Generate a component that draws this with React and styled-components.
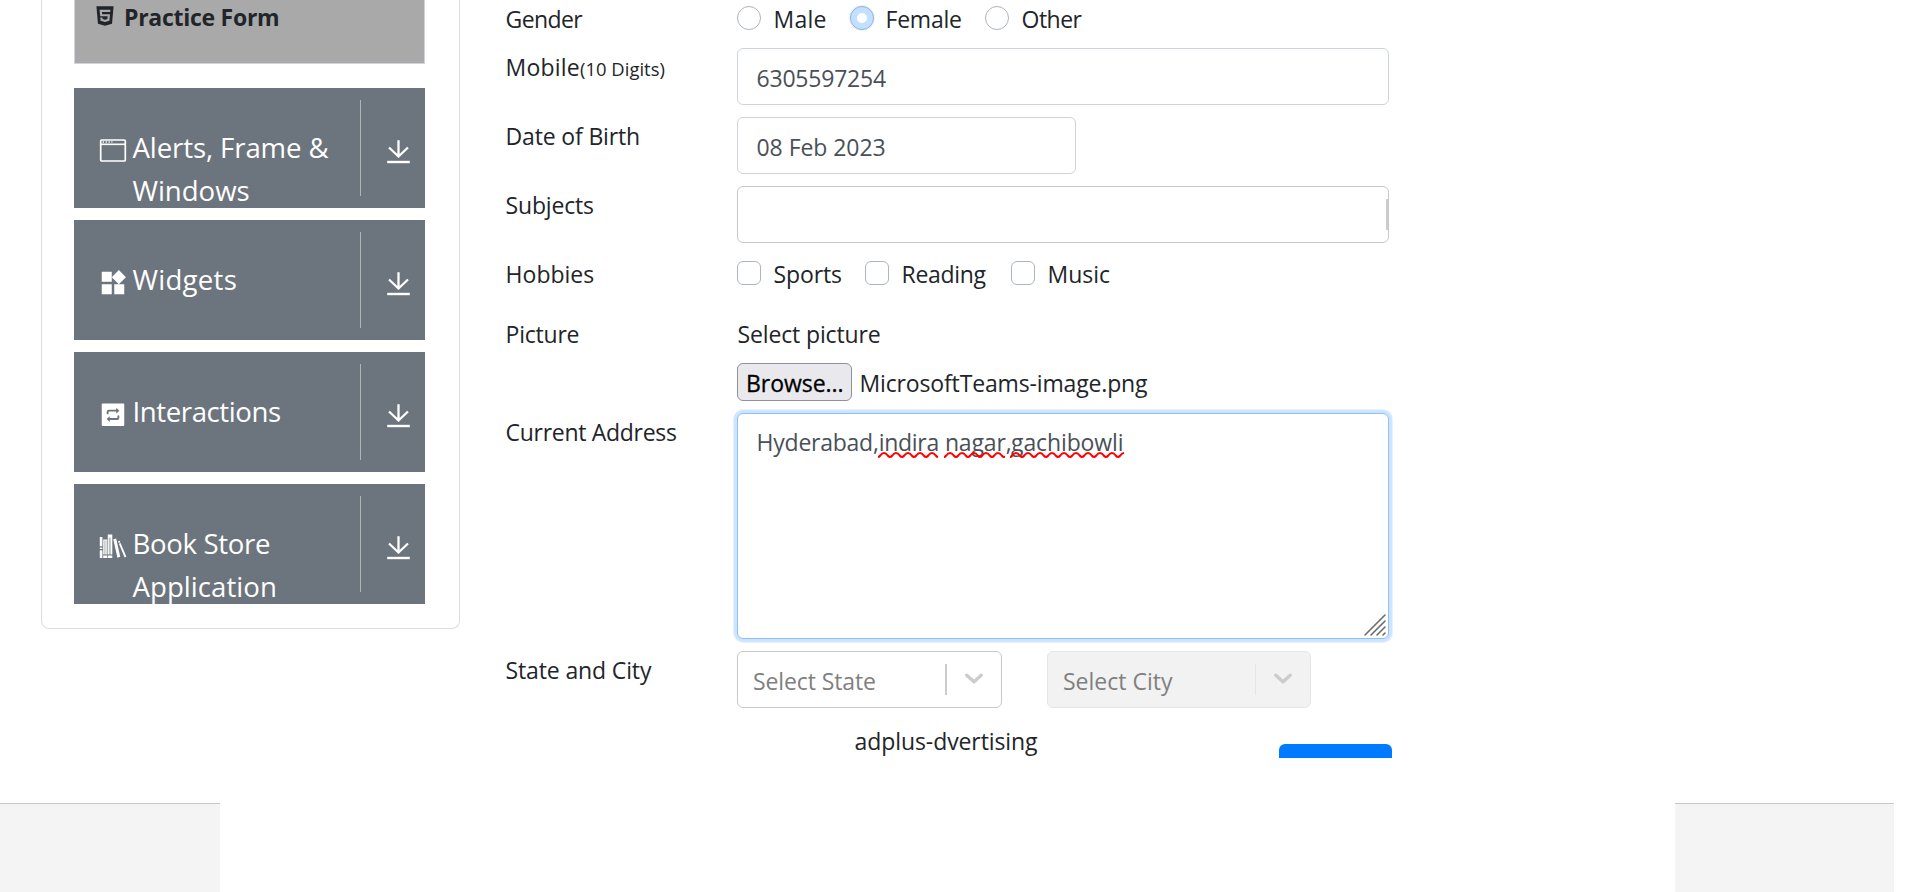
import React from "react";
import styled, { createGlobalStyle, css } from "styled-components";
import { AiFillHtml5 } from "react-icons/ai";
import { MdWidgets } from "react-icons/md";

const GlobalStyle = createGlobalStyle`
  *, *::before, *::after { box-sizing: border-box; }
  body {
    margin: 0;
    background: #fff;
    color: #212529;
    font-family: "Open Sans", "Noto Sans", sans-serif;
    font-size: 23px;
    line-height: 36px;
    overflow: hidden;
  }
`;

const Page = styled.div`
  display: flex;
  flex-direction: column;
  width: 1920px;
  height: 892px;
  overflow: hidden;
`;

const Main = styled.main`
  display: flex;
  align-items: flex-start;
  height: 758px;
  overflow: hidden;
`;

const Text = styled.span`
  white-space: pre;
  letter-spacing: ${(p) => p.$track ?? -0.15}px;
`;

/* ---------- sidebar ---------- */

const Sidebar = styled.aside`
  width: 419px;
  height: 629px;
  margin-left: 41px;
  padding: 0 34px 24px 32px;
  border: 1px solid #dcdddf;
  border-top: 0;
  border-radius: 0 0 8px 8px;
`;

const ActiveItem = styled.div`
  display: flex;
  height: 64px;
  margin-bottom: 24px;
  padding: 4px 0 0 18px;
  background: #a9a9a9;
  border: 1px solid #d0d4da;
  border-top: 0;
  font-weight: 700;
  line-height: 28px;
  svg { flex: none; margin-right: 7px; }
`;

const ActiveLabel = styled(Text)`
  margin-top: -1px;
`;

const Group = styled.section`
  display: flex;
  height: 120px;
  margin-bottom: 12px;
  background: #6c747d;
  color: #fff;
  overflow: hidden;
`;

const GroupHead = styled.div`
  display: flex;
  flex: 1;
  padding: 38px 0 0 23.5px;
`;

const GroupIcon = styled.span`
  flex: none;
  width: 35px;
  height: 30px;
  margin-top: 10px;
  svg { display: block; }
`;

const GroupTitle = styled.div`
  display: flex;
  flex-direction: column;
  font-size: 27.6px;
  line-height: 43.2px;
`;

const GroupToggle = styled.div`
  width: 65px;
  height: 96px;
  margin-top: 12px;
  padding: 38px 0 0 24px;
  border-left: 1px solid #b3b3b3;
  svg { display: block; }
`;

/* ---------- form ---------- */

const Form = styled.form`
  width: 888px;
  margin-left: 44px;
`;

const Row = styled.div`
  display: grid;
  grid-template-columns: 233px 1fr;
  align-items: start;
  height: ${(p) => p.$h}px;
`;

const Label = styled.label`
  padding: 1px 0 0 1.6px;
`;

const Small = styled(Text)`
  font-size: 18.4px;
`;

const field = css`
  border: 1px solid #ced4da;
  border-radius: 6px;
  background: #fff;
`;

const Input = styled.div`
  ${field}
  display: flex;
  width: ${(p) => p.$w}px;
  height: 57px;
  padding: 11px 0 0 18.5px;
  color: #495057;
`;

const Subjects = styled.div`
  ${field}
  display: flex;
  align-items: center;
  justify-content: flex-end;
  width: 652px;
  height: 57px;
  border-color: #c8c8c8;
`;

const Separator = styled.span`
  flex: none;
  width: ${(p) => p.$w ?? 2}px;
  height: 31px;
  margin-top: -1px;
  background: ${(p) => (p.$faint ? "#e6e6e6" : "#ccc")};
`;

const Options = styled.div`
  display: flex;
  padding-top: ${(p) => p.$top}px;
`;

const Option = styled.label`
  display: flex;
  width: ${(p) => p.$w}px;
`;

const Mark = styled.span`
  flex: none;
  display: grid;
  place-items: center;
  width: 24px;
  height: 24px;
  margin-right: 12.5px;
  border: 1px solid #adb5bd;
  border-radius: ${(p) => (p.$round ? "50%" : "6px")};
  ${(p) =>
    p.$on &&
    css`
      margin-right: 11.5px;
      background: #c4e0ff;
      border-color: #8fb4dc;
      box-shadow: 0 0 0 1px #e8f2fd;
      &::after {
        content: "";
        width: 10px;
        height: 10px;
        border-radius: 50%;
        background: #fff;
      }
    `}
`;

const OptionText = styled(Text)`
  margin-top: ${(p) => p.$drop}px;
`;

const Picture = styled.div`
  display: flex;
  flex-direction: column;
  padding-top: 1px;
`;

const PictureTitle = styled(Text)`
  padding-left: 0.6px;
`;

const FilePicker = styled.div`
  display: flex;
  height: 38px;
  margin-top: 11px;
  line-height: 40px;
`;

const Browse = styled.button`
  width: 115px;
  height: 38px;
  margin: 0 7.5px 0 0;
  padding: 0 0 0 8px;
  border: 1px solid #8f8f9d;
  border-radius: 6px;
  background: #e9e9ed;
  color: #000;
  font: inherit;
  line-height: 39px;
  text-align: left;
  -webkit-text-stroke: 0.3px #000;
`;

const TextArea = styled.div`
  ${field}
  position: relative;
  display: flex;
  width: 652px;
  height: 226px;
  padding: 10px 0 0 18.6px;
  border-color: #8cc0f8;
  box-shadow: 0 0 0 3px #cfe5ff, 0 0 0 4px #e6f2ff;
  color: #495057;
`;

const Misspelt = styled(Text)`
  position: relative;
  svg {
    position: absolute;
    left: -1px;
    top: 28px;
  }
`;

const Grip = styled.svg`
  position: absolute;
  right: 1px;
  bottom: 1px;
`;

const Selects = styled.div`
  display: flex;
  gap: 45px;
`;

const Select = styled.div`
  ${field}
  display: flex;
  align-items: center;
  width: ${(p) => p.$w}px;
  height: 57px;
  border-color: ${(p) => (p.$off ? "#e6e6e6" : "#c8c8c8")};
  background: ${(p) => (p.$off ? "#f2f2f2" : "#fff")};
  color: #808080;
  padding-left: 15px;
  svg { flex: none; margin: -1px 17px 0 17px; }
`;

const SelectText = styled(Text)`
  flex: 1;
  margin-top: 3px;
`;

const Actions = styled.div`
  display: flex;
  align-items: flex-start;
  justify-content: space-between;
  padding: 15px 0 0 350.6px;
`;

const Submit = styled.button`
  width: 113px;
  height: 57px;
  margin: 21px 0 0;
  border: 0;
  border-radius: 6px;
  background: #007bff;
`;

/* ---------- footer ---------- */

const Footer = styled.footer`
  display: flex;
  justify-content: space-between;
  width: 1894px;
  height: 89px;
  margin-top: 45px;
`;

const FooterPanel = styled.div`
  width: ${(p) => p.$w}px;
  background: #f4f4f4;
  border-top: 1px solid #c8c8c8;
`;

/* ---------- drawings ---------- */

const WindowIcon = () => (
  <svg width="30" height="30" viewBox="0 0 30 30" fill="none" stroke="#fff">
    <rect x="2.7" y="4" width="24.6" height="21" rx="1" strokeWidth="1.7" />
    <path d="M2.7 8.3h24.6" strokeWidth="1.6" />
    <path d="M4.7 6.1h1.3M7.6 6.1h1.3M10.5 6.1h1.3M13.4 6.1h1" strokeWidth="1.5" />
  </svg>
);

const SwapIcon = () => (
  <svg width="30" height="30" viewBox="0 0 24 24">
    <rect x="3" y="2.8" width="18" height="18" rx="0.8" fill="#fff" />
    <g fill="none" stroke="#6c747d" strokeWidth="1.5" strokeLinecap="round" strokeLinejoin="round">
      <path d="M7.7 10.7V9.5q0-1 1-1h6.4M16.3 13v1.2q0 1-1 1H8.9" />
    </g>
    <path d="M14.6 6.2v4.6l2.5-2.3zM9.4 12.9v4.6l-2.5-2.3z" fill="#6c747d" />
  </svg>
);

const BooksIcon = () => (
  <svg width="30" height="30" viewBox="0 0 30 30" fill="#fff">
    <path d="M1.8 5h2.6v9.3H1.8zM1.8 15.5h2.6v1.4H1.8zM1.8 18.3h2.6v7.7H1.8z" />
    <path d="M5.2 7.6h1.1v14.8H5.2zM8.3 7.6h1v14.8h-1zM5.2 7.6h4v1.2h-4zM5.2 23.4h4V26h-4z" />
    <path d="M6.3 8.8h2v13.6h-2z" opacity=".75" />
    <path d="M9.8 2.4h4.5v3.4H9.8zM9.8 5.8h1.1v16.6H9.8zM12.5 5.8h1.8v16.6h-1.8zM9.8 23.4h4.5V26H9.8z" />
    <path d="M10.9 5.8h1.6v16.6h-1.6z" opacity=".55" />
    <path d="M15.3 7.3l2.9-.8 4 18.3-2.8.9z" />
    <path d="M20 9.6l1.7-.8.7 1.5-1.8.8zM20.9 11.8l1.7-.8 5.7 13.5-1.7.9z" />
  </svg>
);

const DownIcon = () => (
  <svg width="30" height="30" viewBox="0 0 30 30" fill="none" stroke="#fff" strokeWidth="2.3">
    <path d="M13.5 2.2v17M4 9.5l9.5 9 9.5-9" />
    <path d="M2.2 24h22.6" strokeWidth="2.4" />
  </svg>
);

const Chevron = () => (
  <svg width="20" height="12" viewBox="0 0 20 12" fill="none" stroke="#ccc" strokeWidth="3.4" strokeLinecap="round" strokeLinejoin="round">
    <path d="M2.8 2.2l7.2 6.6 7.2-6.6" />
  </svg>
);

const Squiggle = ({ width }) => {
  let d = "M0 5";
  for (let x = 0; x < width; x += 12) d += "q1 0 2.3-1.5q1.7-2.5 3.7-2.5t3.7 2.5q1.3 1.5 2.3 1.5";
  return (
    <svg width={width} height="7" viewBox={`0 0 ${width} 7`} fill="none" stroke="#f00" strokeWidth="2">
      <path d={d} />
    </svg>
  );
};

/* ---------- data ---------- */

const groups = [
  { icon: <WindowIcon />, lines: [["Alerts, Frame &", -0.11], ["Windows", -0.04]] },
  { icon: <MdWidgets size={30} />, lines: [["Widgets", 0.25]] },
  { icon: <SwapIcon />, lines: [["Interactions", -0.42]] },
  { icon: <BooksIcon />, lines: [["Book Store", -0.34], ["Application", 0.04]] },
];

const genders = [
  { text: "Male", w: 113, track: 0.24 },
  { text: "Female", w: 135, track: -0.23, on: true },
  { text: "Other", w: 110, track: -0.5 },
];

const hobbies = [
  { text: "Sports", w: 128, track: -0.12 },
  { text: "Reading", w: 146, track: -0.31 },
  { text: "Music", w: 110, track: -0.01 },
];

export default function App() {
  return (
    <Page>
      <GlobalStyle />
      <Main>
        <Sidebar>
          <ActiveItem>
            <AiFillHtml5 size={24} />
            <ActiveLabel $track={-0.27}>Practice Form</ActiveLabel>
          </ActiveItem>
          {groups.map((g) => (
            <Group key={g.lines[0][0]}>
              <GroupHead>
                <GroupIcon>{g.icon}</GroupIcon>
                <GroupTitle>
                  {g.lines.map(([line, track]) => (
                    <Text key={line} $track={track}>{line}</Text>
                  ))}
                </GroupTitle>
              </GroupHead>
              <GroupToggle>
                <DownIcon />
              </GroupToggle>
            </Group>
          ))}
        </Sidebar>

        <Form>
          <Row $h={48}>
            <Label><Text $track={-0.6}>Gender</Text></Label>
            <Options $top={6}>
              {genders.map((o) => (
                <Option key={o.text} $w={o.w}>
                  <Mark $round $on={o.on} />
                  <OptionText $track={o.track} $drop={-5}>{o.text}</OptionText>
                </Option>
              ))}
            </Options>
          </Row>
          <Row $h={69}>
            <Label>
              <Text $track={0.2}>Mobile</Text>
              <Small $track={0.04}>(10 Digits)</Small>
            </Label>
            <Input $w={652}><Text $track={-0.21}>6305597254</Text></Input>
          </Row>
          <Row $h={69}>
            <Label><Text $track={-0.16}>Date of Birth</Text></Label>
            <Input $w={339}><Text $track={-0.05}>08 Feb 2023</Text></Input>
          </Row>
          <Row $h={69}>
            <Label><Text $track={-0.18}>Subjects</Text></Label>
            <Subjects><Separator /></Subjects>
          </Row>
          <Row $h={60}>
            <Label><Text $track={0}>Hobbies</Text></Label>
            <Options $top={6}>
              {hobbies.map((o) => (
                <Option key={o.text} $w={o.w}>
                  <Mark />
                  <OptionText $track={o.track} $drop={-5}>{o.text}</OptionText>
                </Option>
              ))}
            </Options>
          </Row>
          <Row $h={98}>
            <Label><Text $track={-0.23}>Picture</Text></Label>
            <Picture>
              <PictureTitle>Select picture</PictureTitle>
              <FilePicker>
                <Browse type="button"><Text $track={-0.05}>Browse...</Text></Browse>
                <Text $track={-0.15}>MicrosoftTeams-image.png</Text>
              </FilePicker>
            </Picture>
          </Row>
          <Row $h={238}>
            <Label><Text $track={-0.3}>Current Address</Text></Label>
            <TextArea>
              <Text $track={-0.25}>Hyderabad,</Text>
              <Misspelt $track={-0.26}>indira<Squiggle width={60} /></Misspelt>
              <Text> </Text>
              <Misspelt $track={-0.16}>nagar<Squiggle width={61} /></Misspelt>
              <Text $track={-0.5}>,</Text>
              <Misspelt $track={-0.13}>gachibowli<Squiggle width={114} /></Misspelt>
              <Grip width="24" height="24" viewBox="0 0 24 24" stroke="#6b6b6b" strokeWidth="1.6" strokeLinecap="round">
                <path d="M2 22L22 2M8 22L22 8M14 22l8-8M20 22l2-2" />
              </Grip>
            </TextArea>
          </Row>
          <Row $h={57}>
            <Label><Text $track={-0.14}>State and City</Text></Label>
            <Selects>
              <Select $w={265}>
                <SelectText $track={-0.11}>Select State</SelectText>
                <Separator />
                <Chevron />
              </Select>
              <Select $w={264} $off>
                <SelectText $track={0.01}>Select City</SelectText>
                <Separator $w={1} $faint />
                <Chevron />
              </Select>
            </Selects>
          </Row>
          <Actions>
            <Text $track={-0.09}>adplus-dvertising</Text>
            <Submit type="button" aria-label="Submit" />
          </Actions>
        </Form>
      </Main>
      <Footer>
        <FooterPanel $w={220} />
        <FooterPanel $w={219} />
      </Footer>
    </Page>
  );
}
